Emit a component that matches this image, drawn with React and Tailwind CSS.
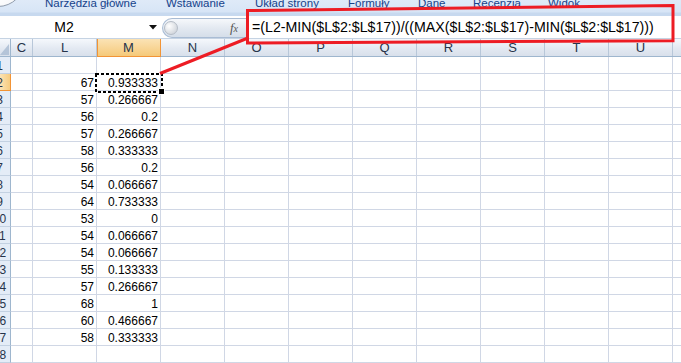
import React from "react";

const tabs = [
    { label: "Narzędzia główne", w: "w-[121px]" },
    { label: "Wstawianie", w: "w-[89px]" },
    { label: "Układ strony", w: "w-[93px]" },
    { label: "Formuły", w: "w-[70px]" },
    { label: "Dane", w: "w-[55px]" },
    { label: "Recenzja", w: "w-[75px]" },
    { label: "Widok", w: "w-[60px]" },
];

const cols = [
    { id: "C", w: "w-[22px]" },
    { id: "L", w: "w-[64px]" },
    { id: "M", w: "w-[64px]" },
    { id: "N", w: "w-[64px]" },
    { id: "O", w: "w-[64px]" },
    { id: "P", w: "w-[64px]" },
    { id: "Q", w: "w-[64px]" },
    { id: "R", w: "w-[64px]" },
    { id: "S", w: "w-[64px]" },
    { id: "T", w: "w-[64px]" },
    { id: "U", w: "w-[64px]" },
];

const lValues = [67, 57, 56, 57, 58, 56, 54, 64, 53, 54, 54, 55, 57, 68, 60, 58];
const mValues = [
    "0.933333", "0.266667", "0.2", "0.266667", "0.333333", "0.2", "0.066667", "0.733333",
    "0", "0.066667", "0.066667", "0.133333", "0.266667", "1", "0.466667", "0.333333",
];

const rows = Array.from({ length: 18 }, (_, i) => i + 1);

function cellText(col, row) {
    if (row < 2 || row > 17) return "";
    if (col === "L") return String(lValues[row - 2]);
    if (col === "M") return mValues[row - 2];
    return "";
}

export default function App() {
    return (
        <div className="relative w-[681px] h-[363px] overflow-hidden bg-white font-['Liberation_Sans',Arial,sans-serif]">
            {/* Ribbon tabs */}
            <div className="relative flex h-[16px] pl-[45px] overflow-hidden bg-[linear-gradient(#dfeaf8,#d7e5f6_12px,#c7d9ef_13px,#c7d9ef_16px)]">
                <div className="absolute left-[-29px] top-[-47px] w-[54px] h-[54px] rounded-full border border-[#8f9bab] bg-[radial-gradient(circle_at_50%_80%,#ffffff,#e4e8ee)]" />
                {tabs.map((t) => (
                    <div
                        key={t.label}
                        className={`${t.w} shrink-0 mt-[-3px] text-[11.5px] leading-[13px] text-[#15428b] whitespace-nowrap`}
                    >
                        {t.label}
                    </div>
                ))}
            </div>

            {/* Formula bar */}
            <div className="flex h-[23px] bg-white border-b border-[#c5d3e3]">
                <div className="flex items-center w-[162px] shrink-0">
                    <span className="w-[128px] text-center text-[14px] leading-[22px] text-black">M2</span>
                    <svg className="ml-[21px]" width="8" height="5" viewBox="0 0 8 5">
                        <polygon points="0,0 8,0 4,4.5" fill="#111" />
                    </svg>
                </div>
                <div className="flex items-center mt-[2px] w-[84px] h-[20px] shrink-0 rounded-l-[10px] border border-r-0 border-[#a9bcd4] bg-[linear-gradient(#f6f8fb,#e3e9f1_50%,#d5dee9)] pl-[1px]">
                    <div className="w-[14px] h-[14px] rounded-full border border-[#b5bcc6] bg-[radial-gradient(circle_at_35%_35%,#ffffff,#c4cad2)]" />
                    <span className="ml-auto mr-[8px] font-['Liberation_Serif',serif] italic text-[13px] leading-[16px] text-[#555]">
                        f<span className="text-[10px]">x</span>
                    </span>
                </div>
                <div className="flex-1 pl-[6px] text-[14.2px] leading-[22px] text-black whitespace-nowrap overflow-hidden">
                    =(L2-MIN($L$2:$L$17))/((MAX($L$2:$L$17)-MIN($L$2:$L$17)))
                </div>
            </div>

            {/* Column headers */}
            <div className="flex h-[18px] bg-[linear-gradient(#f5f8fc,#e3e9f2_55%,#d8e0eb)] border-b border-[#9eb6ce]">
                <div className="w-[11px] shrink-0 border-r border-[#9eb6ce] relative">
                    <svg className="absolute left-0 top-[4px]" width="9" height="12" viewBox="0 0 9 12">
                        <polygon points="9,1 9,12 0,12" fill="#b4c4d8" />
                    </svg>
                </div>
                {cols.map((c) => (
                    <div
                        key={c.id}
                        className={`${c.w} shrink-0 text-center pt-[1px] text-[13px] leading-[16px] text-[#27344a] border-r ${
                            c.id === "M"
                                ? "border-[#f29436] bg-[linear-gradient(#fbe3b5,#f8d595_55%,#f5c979)] shadow-[inset_1px_0_0_#f29436,0_1px_0_#f29436]"
                                : "border-[#b8c7d9]"
                        }`}
                    >
                        {c.id}
                    </div>
                ))}
                <div className="flex-1" />
            </div>

            {/* Grid */}
            {rows.map((r) => (
                <div key={r} className="flex h-[17px]">
                    <div
                        className={`w-[11px] shrink-0 overflow-hidden border-r border-b ${
                            r === 2
                                ? "border-r-[#f29436] border-b-[#f29436] bg-[linear-gradient(90deg,#fbe3b5,#f6cc80)]"
                                : "border-r-[#9eb6ce] border-b-[#c3d1e2] bg-[#e4ecf7]"
                        }`}
                    >
                        <div className="w-[21px] ml-[-11px] text-center pt-[2px] text-[12px] leading-[14px] text-[#27344a]">
                            {r}
                        </div>
                    </div>
                    {cols.map((c) => (
                        <div
                            key={c.id}
                            className={`${c.w} shrink-0 border-r border-b border-[#d0d7e5] text-right pr-[2px] pt-[2px] text-[12px] leading-[14px] text-black whitespace-nowrap`}
                        >
                            {cellText(c.id, r)}
                        </div>
                    ))}
                    <div className="flex-1 border-b border-[#d0d7e5]" />
                </div>
            ))}

            {/* Copy marquee around M2 */}
            <svg className="absolute left-[94px] top-[72px] pointer-events-none" width="72" height="24" viewBox="0 0 72 24">
                <rect x="2" y="2" width="66" height="18" fill="none" stroke="#ffffff" strokeWidth="2" />
                <rect x="2" y="2" width="66" height="18" fill="none" stroke="#000000" strokeWidth="2" strokeDasharray="3 2" />
                <rect x="64.5" y="16.5" width="6" height="6" fill="#000000" stroke="#ffffff" strokeWidth="1" />
            </svg>

            {/* Red annotation */}
            <svg className="absolute left-0 top-0 pointer-events-none" width="681" height="363" viewBox="0 0 681 363">
                <polygon
                    points="247.5,10.5 673,5.5 673,40.7 247.5,43"
                    fill="none"
                    stroke="#ed1c24"
                    strokeWidth="3"
                />
                <line x1="160" y1="73.5" x2="248" y2="38" stroke="#ed1c24" strokeWidth="3" />
            </svg>
        </div>
    );
}
